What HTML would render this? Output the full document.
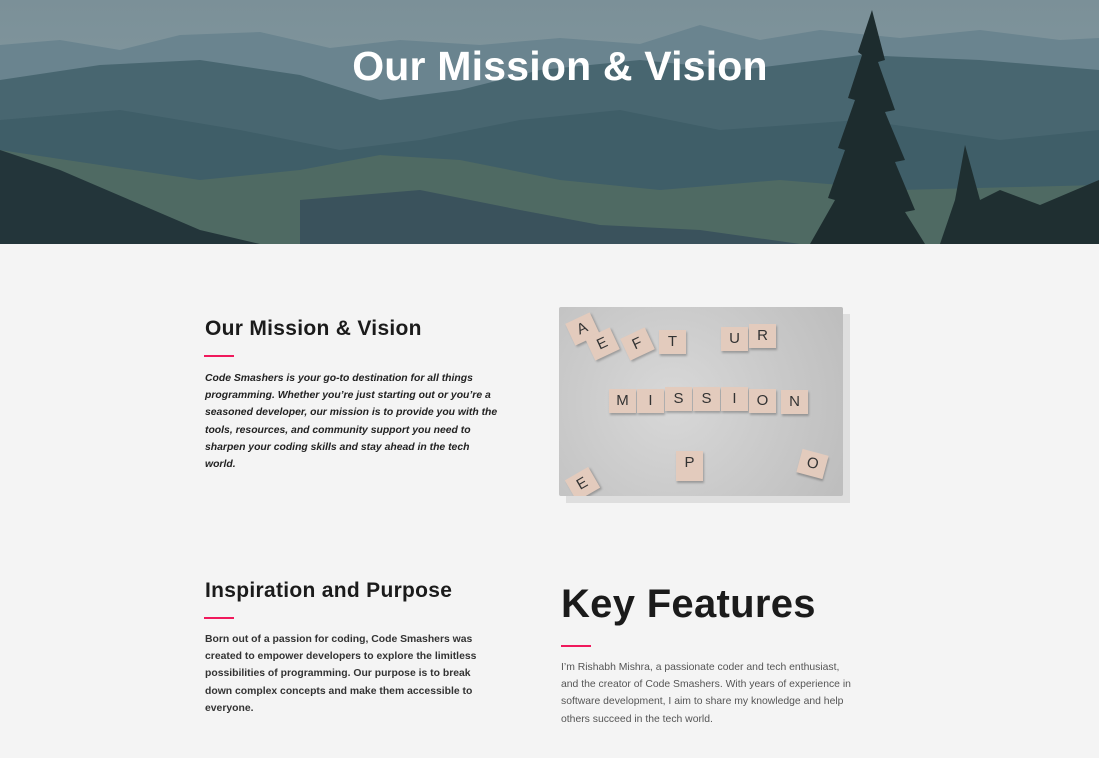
<!DOCTYPE html>
<html><head><meta charset="utf-8"><style>
*{margin:0;padding:0;box-sizing:border-box}
body{width:1099px;height:758px;overflow:hidden;background:#f4f4f4;font-family:"Liberation Sans",sans-serif;position:relative}
.hero{position:absolute;left:0;top:0;width:1099px;height:244px;overflow:hidden;background:#5d7480}
.hero h1{position:absolute;left:0;width:1120px;top:43px;text-align:center;color:#fff;font-size:41px;font-weight:bold;letter-spacing:0.2px}
.abs{position:absolute}
h2{position:absolute;color:#1b1b1b;font-weight:bold;font-size:21px;letter-spacing:0.3px}
.bar{position:absolute;height:2px;width:30px;background:#f0195c}
p{position:absolute;font-size:10.4px;line-height:17.2px;color:#222;white-space:nowrap}
.tile{position:absolute;background:#e3cbbd;width:27px;height:24px;font-size:15px;color:#333;text-align:center;line-height:24px;box-shadow:1px 2px 2px rgba(0,0,0,.25)}
</style></head><body>
<div class="hero">
<svg width="1099" height="244" style="position:absolute;left:0;top:0">
<defs><linearGradient id="sky" x1="0" y1="0" x2="0" y2="1"><stop offset="0" stop-color="#7b9098"/><stop offset="1" stop-color="#8aa0a6"/></linearGradient></defs>
<rect width="1099" height="244" fill="url(#sky)"/>
<polygon points="0,45 60,40 120,50 180,35 260,32 330,48 400,40 480,45 560,38 640,44 700,25 760,40 820,30 900,38 980,30 1060,40 1099,38 1099,244 0,244" fill="#6a848f"/>
<polygon points="0,80 100,65 200,60 300,75 380,100 460,90 540,70 640,60 740,70 860,55 980,60 1099,70 1099,244 0,244" fill="#486670"/>
<polygon points="0,120 120,110 240,130 340,150 420,140 520,120 620,110 720,130 860,120 1000,140 1099,130 1099,244 0,244" fill="#3f5e68"/>
<polygon points="0,150 100,165 200,180 300,170 380,155 460,160 560,180 660,190 780,180 900,190 1099,185 1099,244 0,244" fill="#4f6a63"/>
<polygon points="0,150 60,170 130,200 200,230 260,244 0,244" fill="#23353a"/>
<polygon points="300,200 420,190 520,210 600,225 700,230 800,244 300,244" fill="#3a525c"/>
<polygon points="872,10 885,60 878,62 895,110 885,112 905,160 895,162 915,210 905,212 925,244 810,244 835,200 828,198 845,150 838,148 855,100 848,98 862,55 858,52" fill="#1d2c2e"/>
<polygon points="965,145 980,200 1000,190 1040,205 1099,180 1099,244 940,244 955,200" fill="#1f2f31"/>
</svg>
<h1>Our Mission &amp; Vision</h1>
</div>

<h2 style="left:205px;top:317px">Our Mission &amp; Vision</h2>
<div class="bar" style="left:204px;top:355px"></div>
<p style="left:205px;top:370px;font-style:italic;font-weight:bold;color:#222">Code Smashers is your go-to destination for all things<br>programming. Whether you’re just starting out or you’re a<br>seasoned developer, our mission is to provide you with the<br>tools, resources, and community support you need to<br>sharpen your coding skills and stay ahead in the tech<br>world.</p>

<div class="abs" style="left:566px;top:314px;width:284px;height:189px;background:#dedede"></div>
<div class="abs" style="left:559px;top:307px;width:284px;height:189px;background:#cfcfcf;border-radius:2px;overflow:hidden;background-image:radial-gradient(circle at 40% 50%,#d8d8d8,#bdbdbd)">
<div class="tile" style="left:50px;top:82px">M</div>
<div class="tile" style="left:78px;top:82px">I</div>
<div class="tile" style="left:106px;top:80px">S</div>
<div class="tile" style="left:134px;top:80px">S</div>
<div class="tile" style="left:162px;top:80px">I</div>
<div class="tile" style="left:190px;top:82px">O</div>
<div class="tile" style="left:222px;top:83px">N</div>
<div class="tile" style="left:117px;top:144px;height:30px">P</div>
<div class="tile" style="left:240px;top:145px;transform:rotate(15deg)">O</div>
<div class="tile" style="left:10px;top:165px;transform:rotate(-30deg)">E</div>
<div class="tile" style="left:10px;top:10px;transform:rotate(-25deg)">A</div>
<div class="tile" style="left:30px;top:25px;transform:rotate(-25deg)">E</div>
<div class="tile" style="left:65px;top:25px;transform:rotate(-25deg)">F</div>
<div class="tile" style="left:100px;top:23px">T</div>
<div class="tile" style="left:162px;top:20px">U</div>
<div class="tile" style="left:190px;top:17px">R</div>
</div>

<h2 style="left:205px;top:579px">Inspiration and Purpose</h2>
<div class="bar" style="left:204px;top:617px"></div>
<p style="left:205px;top:631px;font-weight:bold;color:#333">Born out of a passion for coding, Code Smashers was<br>created to empower developers to explore the limitless<br>possibilities of programming. Our purpose is to break<br>down complex concepts and make them accessible to<br>everyone.</p>

<h2 style="left:561px;top:582px;font-size:40px">Key Features</h2>
<div class="bar" style="left:561px;top:645px"></div>
<p style="left:561px;top:659px;color:#555">I’m Rishabh Mishra, a passionate coder and tech enthusiast,<br>and the creator of Code Smashers. With years of experience in<br>software development, I aim to share my knowledge and help<br>others succeed in the tech world.</p>
</body></html>
